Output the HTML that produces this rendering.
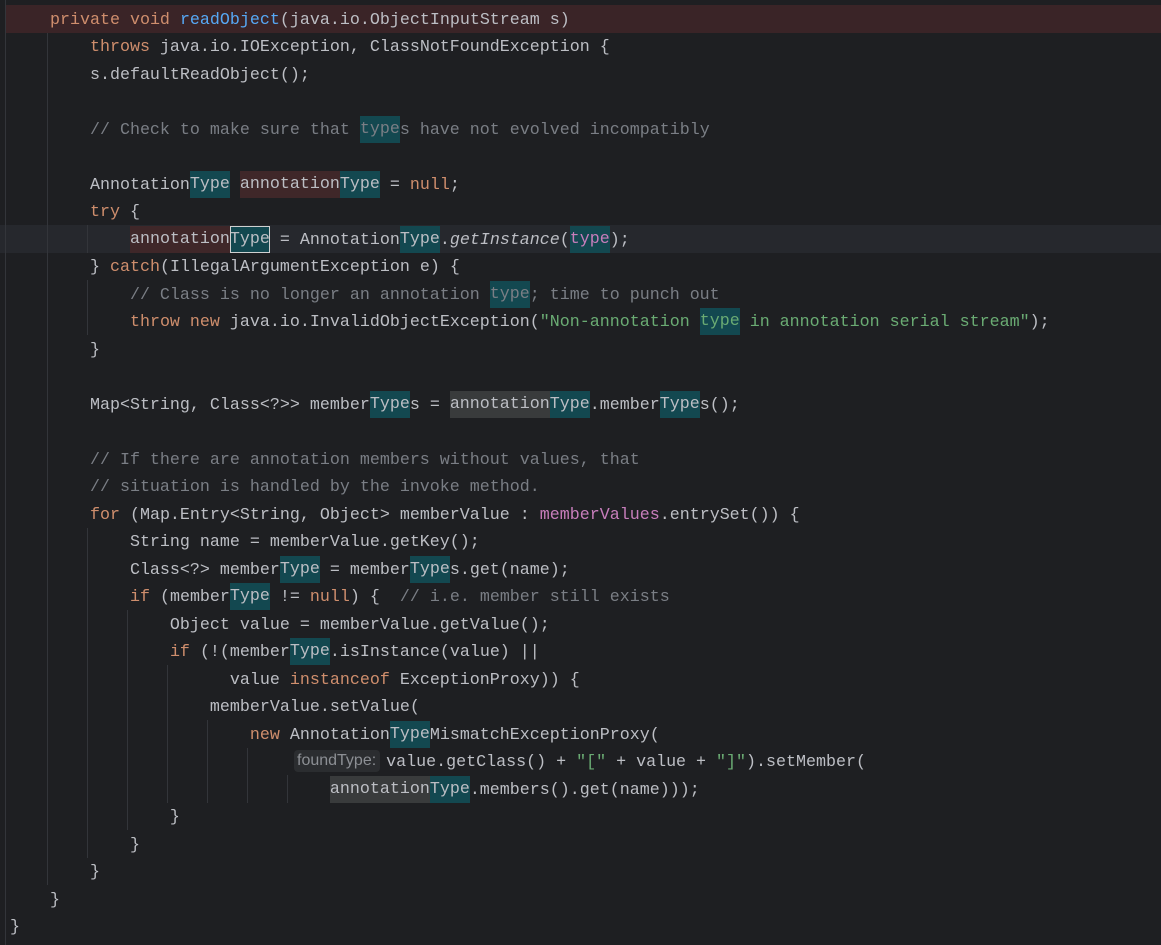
<!DOCTYPE html>
<html><head><meta charset="utf-8"><style>
html,body{margin:0;padding:0;background:#1e1f22;width:1161px;height:945px;overflow:hidden;position:relative}
.l{position:absolute;left:10px;height:27.5px;line-height:27.5px;font-family:"Liberation Mono",monospace;font-size:16.67px;color:#bcbec4;white-space:pre;margin-top:1px}
.k{color:#cf8e6d}.m{color:#56a8f5}.c{color:#7a7e85}.s{color:#6aab73}.f{color:#c77dbb}.i{font-style:italic}
.h{background:#134850;display:inline-block;height:27px;vertical-align:top;margin-top:-1px}
.r{background:#3f2729;display:inline-block;height:27px;vertical-align:top;margin-top:-1px}
.g{background:#393b3c;display:inline-block;height:27px;vertical-align:top;margin-top:-1px}
.b{outline:1px solid #d0d0d0;outline-offset:-1px}
.v{position:absolute;width:1px;background:#33353a}
.hint{display:inline-block;background:#2b2d30;color:#8c8f94;font-family:"Liberation Sans",sans-serif;font-size:16px;border-radius:4px;height:22px;line-height:22px;padding:0 4px 0 3px;vertical-align:top;margin-top:1px;margin-right:6px}
</style></head><body>
<div style="position:absolute;left:6px;top:5px;width:1155px;height:28px;background:#3a2427"></div>
<div style="position:absolute;left:0;top:225px;width:1161px;height:28px;background:#26282d"></div>
<div class="v" style="left:5px;top:0;height:945px"></div>
<div class="v" style="left:47px;top:33px;height:852px"></div>
<div class="v" style="left:87px;top:225px;height:28px"></div>
<div class="v" style="left:87px;top:280px;height:55px"></div>
<div class="v" style="left:87px;top:528px;height:330px"></div>
<div class="v" style="left:127px;top:610px;height:220px"></div>
<div class="v" style="left:167px;top:665px;height:138px"></div>
<div class="v" style="left:207px;top:720px;height:83px"></div>
<div class="v" style="left:247px;top:748px;height:55px"></div>
<div class="v" style="left:287px;top:775px;height:28px"></div>

<div class="l" style="top:5.5px">    <span class="k">private void </span><span class="m">readObject</span>(java.io.ObjectInputStream s)</div>
<div class="l" style="top:33px">        <span class="k">throws </span>java.io.IOException, ClassNotFoundException {</div>
<div class="l" style="top:60.5px">        s.defaultReadObject();</div>
<div class="l c" style="top:115.5px">        // Check to make sure that <span class="h">type</span>s have not evolved incompatibly</div>
<div class="l" style="top:170.5px">        Annotation<span class="h">Type</span> <span class="r">annotation</span><span class="h">Type</span> = <span class="k">null</span>;</div>
<div class="l" style="top:198px">        <span class="k">try </span>{</div>
<div class="l" style="top:225.5px">            <span class="r">annotation</span><span class="h b">Type</span> = Annotation<span class="h">Type</span>.<span class="i">getInstance</span>(<span class="h f">type</span>);</div>
<div class="l" style="top:253px">        } <span class="k">catch</span>(IllegalArgumentException e) {</div>
<div class="l c" style="top:280.5px">            // Class is no longer an annotation <span class="h">type</span>; time to punch out</div>
<div class="l" style="top:308px">            <span class="k">throw new </span>java.io.InvalidObjectException(<span class="s">"Non-annotation <span class="h">type</span> in annotation serial stream"</span>);</div>
<div class="l" style="top:335.5px">        }</div>
<div class="l" style="top:390.5px">        Map&lt;String, Class&lt;?&gt;&gt; member<span class="h">Type</span>s = <span class="g">annotation</span><span class="h">Type</span>.member<span class="h">Type</span>s();</div>
<div class="l c" style="top:445.5px">        // If there are annotation members without values, that</div>
<div class="l c" style="top:473px">        // situation is handled by the invoke method.</div>
<div class="l" style="top:500.5px">        <span class="k">for </span>(Map.Entry&lt;String, Object&gt; memberValue : <span class="f">memberValues</span>.entrySet()) {</div>
<div class="l" style="top:528px">            String name = memberValue.getKey();</div>
<div class="l" style="top:555.5px">            Class&lt;?&gt; member<span class="h">Type</span> = member<span class="h">Type</span>s.get(name);</div>
<div class="l" style="top:583px">            <span class="k">if </span>(member<span class="h">Type</span> != <span class="k">null</span>) {  <span class="c">// i.e. member still exists</span></div>
<div class="l" style="top:610.5px">                Object value = memberValue.getValue();</div>
<div class="l" style="top:638px">                <span class="k">if </span>(!(member<span class="h">Type</span>.isInstance(value) ||</div>
<div class="l" style="top:665.5px">                      value <span class="k">instanceof </span>ExceptionProxy)) {</div>
<div class="l" style="top:693px">                    memberValue.setValue(</div>
<div class="l" style="top:720.5px">                        <span class="k">new </span>Annotation<span class="h">Type</span>MismatchExceptionProxy(</div>
<div class="l" style="top:748px;left:294px"><span class="hint">foundType:</span>value.getClass() + <span class="s">"["</span> + value + <span class="s">"]"</span>).setMember(</div>
<div class="l" style="top:775.5px">                                <span class="g">annotation</span><span class="h">Type</span>.members().get(name)));</div>
<div class="l" style="top:803px">                }</div>
<div class="l" style="top:830.5px">            }</div>
<div class="l" style="top:858px">        }</div>
<div class="l" style="top:885.5px">    }</div>
<div class="l" style="top:913px">}</div>
</body></html>
